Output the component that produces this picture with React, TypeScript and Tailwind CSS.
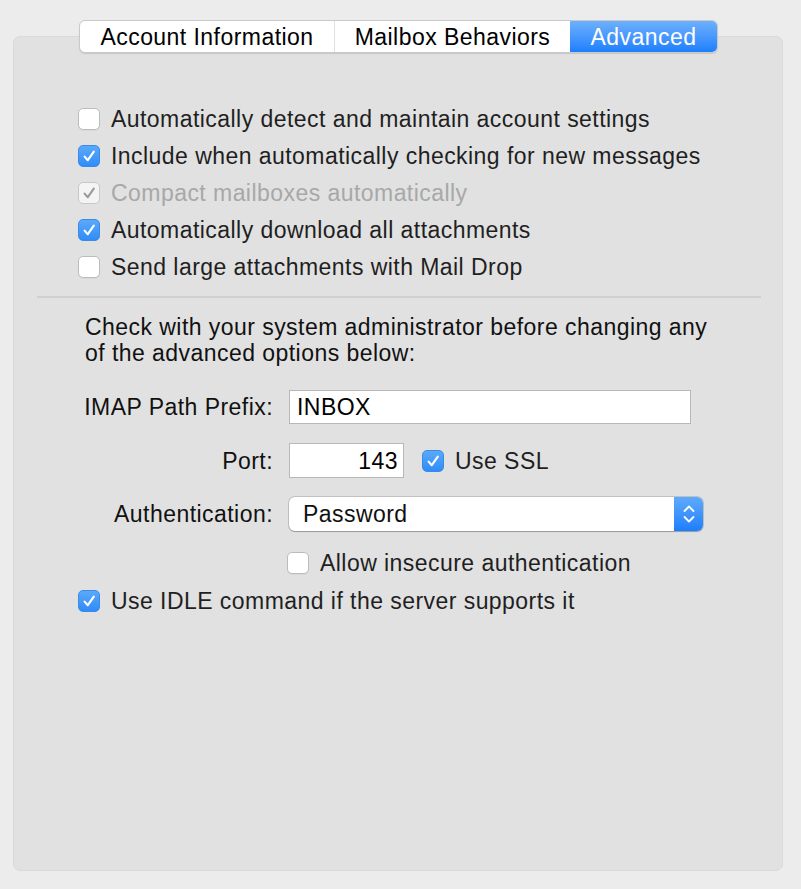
import React from "react";

const font = { fontFamily: '"Liberation Sans", Arial, sans-serif' };

function Tick({ color }: { color: string }) {
  return (
    <svg width="20" height="20" viewBox="0 0 20 20">
      <path d="M5.6 10.6 L8.8 14.2 L14.8 5.6" fill="none" stroke={color} strokeWidth="2.1" strokeLinecap="round" strokeLinejoin="round" />
    </svg>
  );
}

function Check({ state }: { state: "on" | "off" | "dis" }) {
  if (state === "on") {
    return (
      <div className="w-[22px] h-[22px] rounded-[5px] bg-gradient-to-b from-[#5aa9fb] to-[#2f8cf8] border border-[#3b8ae6] flex items-center justify-center shrink-0">
        <Tick color="#ffffff" />
      </div>
    );
  }
  if (state === "dis") {
    return (
      <div className="w-[22px] h-[22px] rounded-[5px] bg-[#f4f4f4] border border-[#c8c8c8] flex items-center justify-center shrink-0">
        <Tick color="#9a9a9a" />
      </div>
    );
  }
  return <div className="w-[22px] h-[22px] rounded-[5px] bg-white border border-[#bcbcbc] shadow-[0_1px_0_rgba(0,0,0,0.04)] shrink-0" />;
}

function Row({ state, label }: { state: "on" | "off" | "dis"; label: string }) {
  return (
    <div className="h-[37px] flex items-center gap-[11px]">
      <Check state={state} />
      <span className={state === "dis" ? "text-[#a8a8a8]" : "text-[#1f1f1f]"}>{label}</span>
    </div>
  );
}

export default function App() {
  return (
    <div className="w-[801px] h-[889px] bg-[#ececec] pt-[20px] text-[23px] leading-[26px] tracking-[0.45px]" style={font}>
      <div className="relative z-10 flex justify-center pr-[4px]">
        <div className="flex h-[33px] rounded-[6px] border border-[#c9c9c9] bg-white shadow-[0_1px_1px_rgba(0,0,0,0.12)] overflow-hidden">
          <div className="w-[255px] flex items-center justify-center text-black border-r border-[#e0e0e0]">Account Information</div>
          <div className="w-[235px] flex items-center justify-center text-black">Mailbox Behaviors</div>
          <div className="w-[147px] flex items-center justify-center text-white bg-gradient-to-b from-[#6db0fd] to-[#1b7ffc]">Advanced</div>
        </div>
      </div>
      <div className="-mt-[17px] mx-[13px] w-[770px] h-[835px] rounded-[7px] bg-[#e1e1e1] border border-[#dadada] pt-[63px]">
        <div className="pl-[64px]">
          <Row state="off" label="Automatically detect and maintain account settings" />
          <Row state="on" label="Include when automatically checking for new messages" />
          <Row state="dis" label="Compact mailboxes automatically" />
          <Row state="on" label="Automatically download all attachments" />
          <Row state="off" label="Send large attachments with Mail Drop" />
        </div>
        <div className="mt-[11px] ml-[23px] w-[724px] h-[2px] bg-[#d0d0d0]" />
        <div className="mt-[16px] ml-[71px] text-[#111]">
          Check with your system administrator before changing any
          <br />
          of the advanced options below:
        </div>
        <div className="mt-[24px] flex items-center">
          <div className="w-[259px] text-right text-[#111]">IMAP Path Prefix:</div>
          <div className="ml-[16px] w-[402px] h-[34px] bg-white border border-[#b8b8b8] flex items-center pl-[7px] text-black">INBOX</div>
        </div>
        <div className="mt-[19px] flex items-center">
          <div className="w-[259px] text-right text-[#111]">Port:</div>
          <div className="ml-[16px] w-[115px] h-[35px] bg-white border border-[#b8b8b8] flex items-center justify-end pr-[5px] text-black">143</div>
          <div className="ml-[18px] flex items-center gap-[11px]">
            <Check state="on" />
            <span className="text-[#1f1f1f]">Use SSL</span>
          </div>
        </div>
        <div className="mt-[19px] flex items-center">
          <div className="w-[259px] text-right text-[#111]">Authentication:</div>
          <div className="ml-[16px] w-[414px] h-[34px] rounded-[6px] bg-white shadow-[0_0_0_1px_rgba(0,0,0,0.14),0_1px_1px_rgba(0,0,0,0.2)] flex overflow-hidden">
            <div className="flex-1 flex items-center pl-[14px] text-[#111]">Password</div>
            <div className="w-[29px] bg-gradient-to-b from-[#5eaafd] to-[#1a7efc] flex items-center justify-center">
              <svg width="14" height="22" viewBox="0 0 14 22">
                <path d="M2.5 8 L7 3.5 L11.5 8" fill="none" stroke="#fff" strokeWidth="1.8" strokeLinecap="round" strokeLinejoin="round" />
                <path d="M2.5 14 L7 18.5 L11.5 14" fill="none" stroke="#fff" strokeWidth="1.8" strokeLinecap="round" strokeLinejoin="round" />
              </svg>
            </div>
          </div>
        </div>
        <div className="mt-[13px] pl-[273px]">
          <Row state="off" label="Allow insecure authentication" />
        </div>
        <div className="mt-[1px] pl-[64px]">
          <Row state="on" label="Use IDLE command if the server supports it" />
        </div>
      </div>
    </div>
  );
}
